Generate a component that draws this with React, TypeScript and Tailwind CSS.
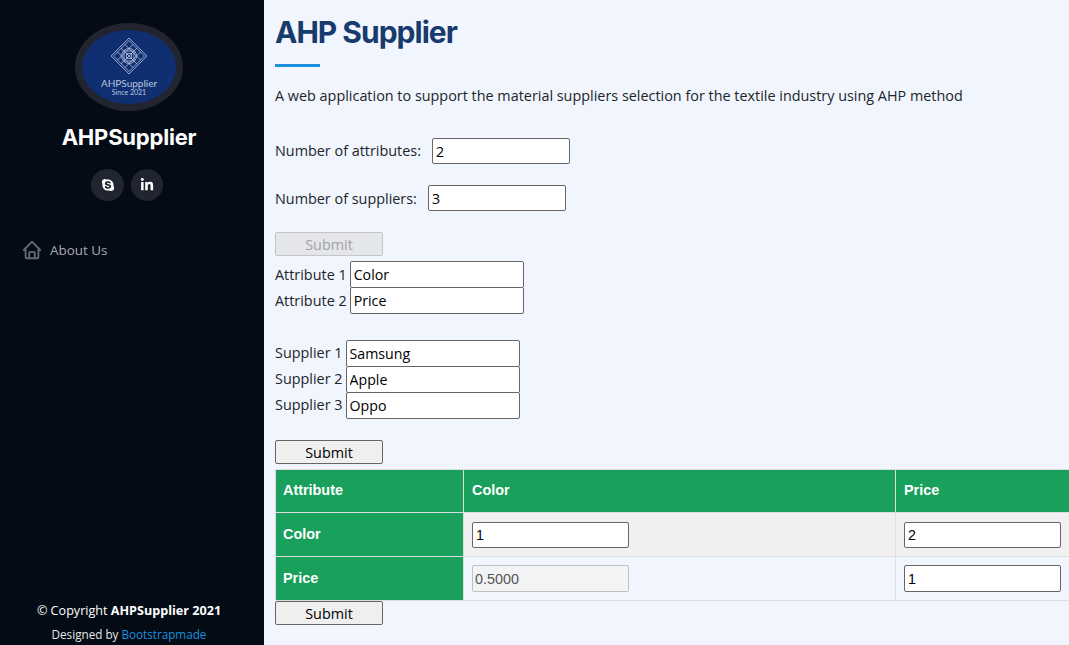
// AHP supplier page
import { FaSkype, FaLinkedinIn } from "react-icons/fa";
import { BiHome } from "react-icons/bi";

const openSans = "font-['Open_Sans',sans-serif]";
const arial = "font-['Liberation_Sans',Arial,sans-serif]";

const attributes = ["Color", "Price"];
const suppliers = ["Samsung", "Apple", "Oppo"];

const LogoMark = () => (
  <svg width="38" height="38" viewBox="0 0 38 38" fill="none" stroke="#b9c6dd" strokeWidth="0.8">
    <path d="M19 1 L37 19 L19 37 L1 19 Z" />
    <path d="M19 3.5 L34.5 19 L19 34.5 L3.5 19 Z" />
    <path d="M11 11 L27 27 M15 7.5 L30.5 23 M7.5 15 L23 30.5 M27 11 L11 27 M23 7.5 L7.5 23 M30.5 15 L15 30.5" />
    <rect x="14" y="14" width="10" height="10" rx="1.5" />
    <rect x="16.5" y="16.5" width="5" height="5" />
    <circle cx="19" cy="19" r="7.5" />
  </svg>
);

const SubmitButton = ({ disabled = false }: { disabled?: boolean }) => (
  <button
    disabled={disabled}
    className={
      disabled
        ? "block w-[108px] h-6 pt-[2px] bg-[#e5e6e9] border border-[#c4c5c8] rounded-[2px] text-[14.4px] text-[#a2a3a6] leading-none"
        : "block w-[108px] h-6 pt-[2px] bg-[#efefef] border border-[#666] rounded-[2px] text-[14.4px] text-black leading-none"
    }
  >
    Submit
  </button>
);

const TextInput = ({ value, width, height = "h-[26px]" }: { value: string; width: string; height?: string }) => (
  <input
    readOnly
    value={value}
    className={`${width} ${height} bg-white border border-[#666] rounded-[2px] px-[3px] text-[14.2px] text-black outline-none`}
  />
);

const Sidebar = () => (
  <aside className={`w-[264px] shrink-0 h-full bg-[#040b14] flex flex-col items-center pr-[6px] ${openSans}`}>
    <div className="mt-[23px] w-[108px] h-[88px] rounded-[50%] border-[7px] border-[#22242f] bg-[#0f2f72] flex flex-col items-center pt-[7px]">
      <LogoMark />
      <span className="text-[10px] leading-[10px] mt-[3px] text-[#b9c6dd] font-['Lato',sans-serif]">AHPSupplier</span>
      <span className="text-[7px] leading-[8px] text-[#b9c6dd] font-['Lato',sans-serif]">Since 2021</span>
    </div>
    <h1 className="mt-[10px] text-[22px] leading-[33px] font-bold text-white font-['Inter',sans-serif] tracking-[-0.2px]">AHPSupplier</h1>
    <div className="mt-[15px] mr-[4px] flex gap-[7px]">
      <a className="w-[33px] h-[32px] rounded-full bg-[#212431] flex items-center justify-center text-white">
        <FaSkype size={14} />
      </a>
      <a className="w-[32px] h-[32px] rounded-full bg-[#212431] flex items-center justify-center text-white">
        <FaLinkedinIn size={14} />
      </a>
    </div>
    <nav className="mt-[38px] w-full pl-[21px] flex items-center gap-[7px] text-[13.4px] text-[#a8a9b4]">
      <BiHome size={22} className="text-[#666877]" />
      About Us
    </nav>
    <footer className="mt-auto mb-[3px] text-center text-white">
      <div className="text-[12.6px] leading-[18px]">
        © Copyright <strong className="font-bold">AHPSupplier 2021</strong>
      </div>
      <div className="mt-[7px] text-[11.7px] leading-[15px] text-[#e6e6e6]">
        Designed by <a className="text-[#1a8fdd]">Bootstrapmade</a>
      </div>
    </footer>
  </aside>
);

const headCell = "border border-[#ddd] bg-[#18a05c] text-white font-bold text-left px-2";
const firstCell = "border border-[#ddd] bg-[#18a05c] text-white font-bold text-left pl-[7px] pr-2";
const bodyCell = "border border-[#ddd] px-2";

const Matrix = () => (
  <table className={`w-[794px] border-collapse table-fixed text-[14.4px] ${arial}`}>
    <colgroup>
      <col className="w-[188px]" />
      <col className="w-[432px]" />
      <col className="w-[174px]" />
    </colgroup>
    <tbody>
      <tr className="h-[43px]">
        <th className={firstCell}>Attribute</th>
        <th className={headCell}>Color</th>
        <th className={headCell}>Price</th>
      </tr>
      <tr className="h-[44px] bg-[#f0f0f0]">
        <th className={firstCell}>Color</th>
        <td className={bodyCell}>
          <TextInput value="1" width="w-[157px] block" />
        </td>
        <td className={bodyCell}>
          <TextInput value="2" width="w-[157px] block" />
        </td>
      </tr>
      <tr className="h-[44px]">
        <th className={firstCell}>Price</th>
        <td className={bodyCell}>
          <input
            readOnly
            disabled
            value="0.5000"
            className="block w-[157px] h-[27px] bg-[#f2f3f5] border border-[#c0c1c3] rounded-[2px] px-[2px] text-[14.4px] text-[#555]"
          />
        </td>
        <td className={bodyCell}>
          <TextInput value="1" width="w-[157px] block" height="h-[27px]" />
        </td>
      </tr>
    </tbody>
  </table>
);

const App = () => {
  return (
    <div className="flex h-[645px] w-[1069px] overflow-hidden bg-[#f1f6fe]">
      <Sidebar />
      <main className={`flex-1 min-w-0 pl-[11px] text-[14.4px] text-[#212529] ${openSans}`}>
        <h2 className="mt-[14px] text-[30px] leading-[36px] font-bold text-[#173b6c] font-['Inter',sans-serif] tracking-[-1px]">AHP Supplier</h2>
        <div className="mt-[14px] w-[45px] h-[3px] bg-[#1a8fdd]" />
        <p className="mt-[18px] leading-[21px]">
          A web application to support the material suppliers selection for the textile industry using AHP method
        </p>

        <div className="mt-[32px] flex items-center h-[26px]">
          <label className="mr-[11px]">Number of attributes:</label>
          <TextInput value="2" width="w-[138px]" />
        </div>
        <div className="mt-[21px] flex items-center h-[26px]">
          <label className="mr-[11px] pt-[2px]">Number of suppliers:</label>
          <TextInput value="3" width="w-[138px]" />
        </div>

        <div className="mt-[21px]">
          <SubmitButton disabled />
        </div>
        <div className="mt-[5px]">
          {attributes.map((name, i) => (
            <div key={name} className="flex items-center h-[26px]">
              <label className="mr-[3px] pt-[2px]">Attribute {i + 1}</label>
              <TextInput value={name} width="w-[174px]" height="h-[27px]" />
            </div>
          ))}
        </div>
        <div className="mt-[27px]">
          {suppliers.map((name, i) => (
            <div key={name} className="flex items-center h-[26px]">
              <label className="mr-[3px]">Supplier {i + 1}</label>
              <TextInput value={name} width="w-[174px]" height="h-[27px]" />
            </div>
          ))}
        </div>

        <div className="mt-[22px] mb-[5px]">
          <SubmitButton />
        </div>
        <Matrix />
        <SubmitButton />
      </main>
    </div>
  );
};

export default App;
